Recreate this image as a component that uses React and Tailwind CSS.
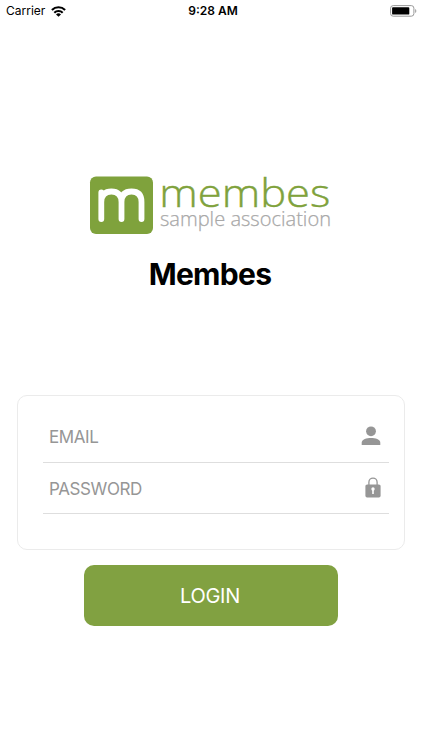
import React, { useState } from 'react';

// Wifi, as in the iOS status bar
const WifiIcon = () => (
  <svg width="15" height="11" viewBox="0 0 15 11" fill="none" stroke="#000" strokeWidth="2.1">
    <path d="M.9 4a9.4 9.4 0 0 1 13.2 0" />
    <path d="M3.3 6.7a6 6 0 0 1 8.4 0" />
    <path d="M7.5 10.8 5 8.5a3.7 3.7 0 0 1 5 0z" fill="#000" stroke="none" />
  </svg>
);

const BatteryIcon = () => (
  <svg width="28" height="12" viewBox="0 0 28 12">
    <rect x="0.6" y="0.6" width="23.3" height="10.6" rx="2.6" fill="none" stroke="#999" strokeWidth="1" />
    <rect x="2.1" y="2.2" width="17.2" height="7.4" rx="0.9" fill="#000" />
    <path d="M25.2 4v4c1.5-.6 1.5-3.4 0-4z" fill="#999" />
  </svg>
);

const Logo = () => (
  <svg width="246" height="60" viewBox="0 0 246 60" overflow="visible" className="block">
    <rect x="1" y="1.5" width="63" height="57.5" rx="6" fill="#7fa23c" />
    <path
      d="M12.3 44V17.5M12.3 27C12.3 20 16 16.5 22.4 16.5S32.5 20 32.5 27V44M32.5 27C32.5 20 36 16.5 42.5 16.5S52.5 20 52.5 27V44"
      fill="none"
      stroke="#fff"
      strokeWidth="5.8"
      strokeLinecap="round"
      strokeLinejoin="round"
    />
    <text
      x="70.3"
      y="31.7"
      fontFamily="'Open Sans', sans-serif"
      fontWeight="300"
      fontSize="39"
      textLength="171"
      lengthAdjust="spacingAndGlyphs"
      fill="#7fa23c"
      stroke="#7fa23c"
      strokeWidth="0.4"
    >
      membes
    </text>
    <text
      x="71"
      y="51"
      fontFamily="'Open Sans', sans-serif"
      fontWeight="300"
      fontSize="19.5"
      textLength="171"
      lengthAdjust="spacingAndGlyphs"
      fill="#a8a8a8"
      stroke="#a8a8a8"
      strokeWidth="0.25"
    >
      sample association
    </text>
  </svg>
);

const UserIcon = () => (
  <svg width="20" height="20" viewBox="0 0 20 20" fill="#969696" className="mr-2 mb-[2px]">
    <circle cx="10" cy="5.3" r="4.9" />
    <path d="M.7 19v-2.300C.7 13.400 5.800 12 10 12s9.300 1.400 9.300 4.700V19z" />
  </svg>
);

const LockIcon = () => (
  <svg width="16" height="21" viewBox="0 0 16 21" className="mr-2 mb-[1px]">
    <path d="M3.9 8V5.2a4.1 4.1 0 0 1 8.200 0V8" fill="none" stroke="#969696" strokeWidth="1.3" />
    <rect x="0.4" y="7.4" width="15.2" height="13" rx="1.7" fill="#969696" />
    <circle cx="8" cy="12" r="1.7" fill="#fff" />
    <path d="M7.2 12h1.6v5H7.2z" fill="#fff" />
  </svg>
);

const App = () => {
  const [email, setEmail] = useState('');
  const [password, setPassword] = useState('');

  return (
    <div className="flex h-[750px] w-[422px] flex-col items-center bg-white font-['Inter','Liberation_Sans',sans-serif]">
      {/* Status bar */}
      <div className="grid h-[22px] w-full grid-cols-3 items-center pl-[6px] pr-[4px]">
        <div className="flex items-center gap-[6px] text-[12px]">
          <span>Carrier</span>
          <WifiIcon />
        </div>
        <span className="pl-[2px] text-center text-[12px] font-semibold">9:28 AM</span>
        <div className="flex justify-end">
          <BatteryIcon />
        </div>
      </div>

      {/* Logo and title */}
      <div className="mt-[153px] ml-[2px]">
        <Logo />
      </div>
      <h1 className="mt-[19px] mr-[2px] text-[30px] leading-[40px] font-bold tracking-[-0.7px]">Membes</h1>

      {/* Login form */}
      <form className="mt-[101px] flex w-full flex-col items-center" onSubmit={(e) => e.preventDefault()}>
        <div className="h-[155px] w-[388px] rounded-[10px] border border-[#ebebeb] pt-[15px] pr-[15px] pl-[25px]">
          <div className="flex h-[52px] items-center border-b border-[#dedede] pl-[6px]">
            <input
              type="email"
              value={email}
              onChange={(e) => setEmail(e.target.value)}
              placeholder="EMAIL"
              className="min-w-0 flex-1 pt-[2px] text-[17px] tracking-[-0.4px] outline-none placeholder:text-[#969696]"
            />
            <UserIcon />
          </div>
          <div className="flex h-[51px] items-center border-b border-[#dedede] pl-[6px]">
            <input
              type="password"
              value={password}
              onChange={(e) => setPassword(e.target.value)}
              placeholder="PASSWORD"
              className="min-w-0 flex-1 pt-[3px] text-[17px] tracking-[-0.4px] outline-none placeholder:text-[#969696]"
            />
            <LockIcon />
          </div>
        </div>
        <button type="submit" className="mt-[15px] h-[61px] w-[254px] rounded-[10px] bg-[#81a141] pr-[2px] text-[20px] tracking-[-0.3px] text-white">
          LOGIN
        </button>
      </form>
    </div>
  );
};

export default App;
